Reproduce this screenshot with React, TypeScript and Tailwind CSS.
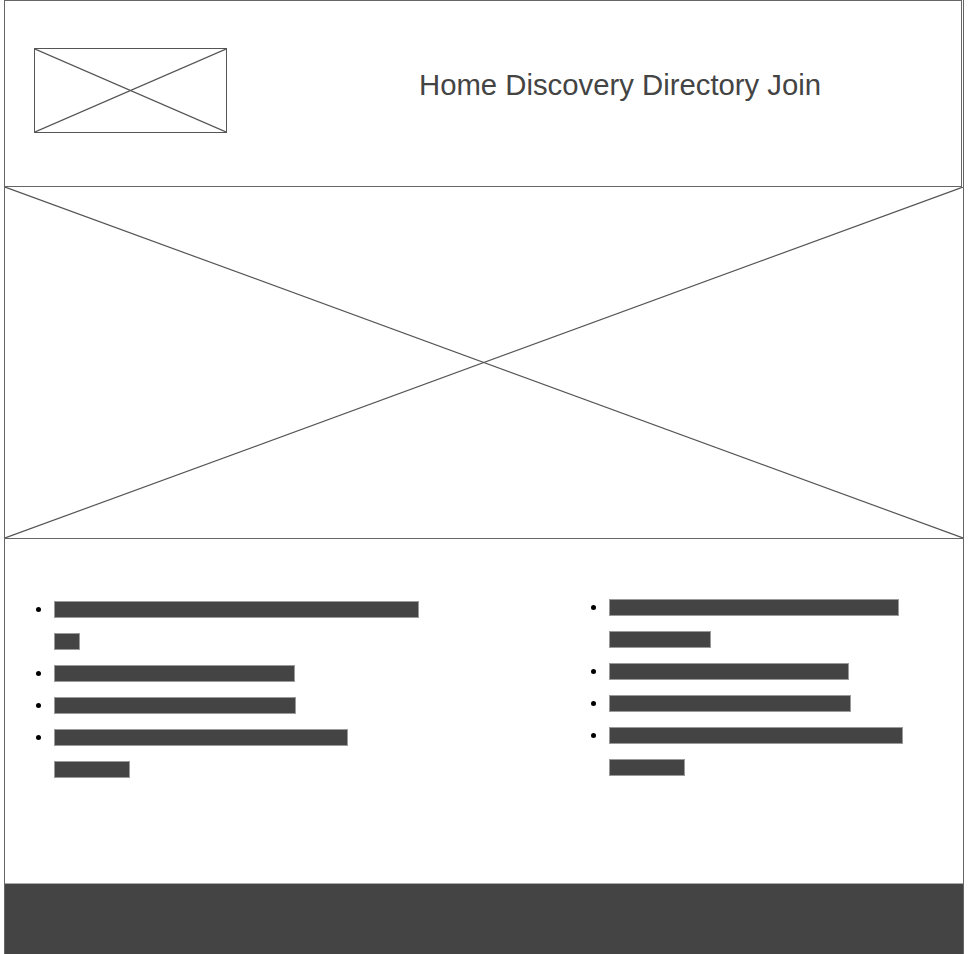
import React from "react";

const Cross = () => (
  <svg className="absolute inset-0 h-full w-full" preserveAspectRatio="none" viewBox="0 0 100 100">
    <line x1="0" y1="0" x2="100" y2="100" stroke="#555" strokeWidth="1.2" vectorEffect="non-scaling-stroke" />
    <line x1="100" y1="0" x2="0" y2="100" stroke="#555" strokeWidth="1.2" vectorEffect="non-scaling-stroke" />
  </svg>
);

const Bar = ({ w }: { w: number }) => (
  <div className="flex h-8 items-center">
    <span className="block h-[17px] border border-[#9a9a9a] bg-[#444]" style={{ width: w }} />
  </div>
);

type Item = number[];

const List = ({ items }: { items: Item[] }) => (
  <ul className="flex flex-col">
    {items.map((lines, i) => (
      <li key={i} className="flex">
        <div className="flex h-8 w-[18px] items-center">
          <span className="h-[5px] w-[5px] rounded-full bg-black" />
        </div>
        <div className="flex flex-col">
          {lines.map((w, j) => (
            <Bar key={j} w={w} />
          ))}
        </div>
      </li>
    ))}
  </ul>
);

const leftItems: Item[] = [[365, 26], [241], [242], [294, 76]];
const rightItems: Item[] = [[290, 102], [240], [242], [294, 76]];

export default function App() {
  return (
    <div className="min-h-[954px] bg-white font-['Liberation_Sans',Arial,sans-serif]">
      <div className="ml-1 flex w-[960px] flex-col border-x border-[#666]">
        {/* header */}
        <div className="flex h-[187px] w-[957px] items-start border-y border-r border-[#666]">
          <div className="relative ml-[29px] mt-[47px] h-[85px] w-[193px] border border-[#555]">
            <Cross />
          </div>
          <nav className="ml-[192px] mt-[68px] text-[29.3px] leading-8 text-[#444]">
            Home Discovery Directory Join
          </nav>
        </div>

        {/* hero */}
        <div className="relative h-[352px] border-b border-[#666]">
          <Cross />
        </div>

        {/* content */}
        <div className="flex h-[344px]">
          <div className="w-[555px] pl-[31px] pt-[54px]">
            <List items={leftItems} />
          </div>
          <div className="pl-[31px] pt-[52px]">
            <List items={rightItems} />
          </div>
        </div>

        {/* footer */}
        <div className="h-[71px] border-t border-[#aaa] bg-[#444]" />
      </div>
    </div>
  );
}
